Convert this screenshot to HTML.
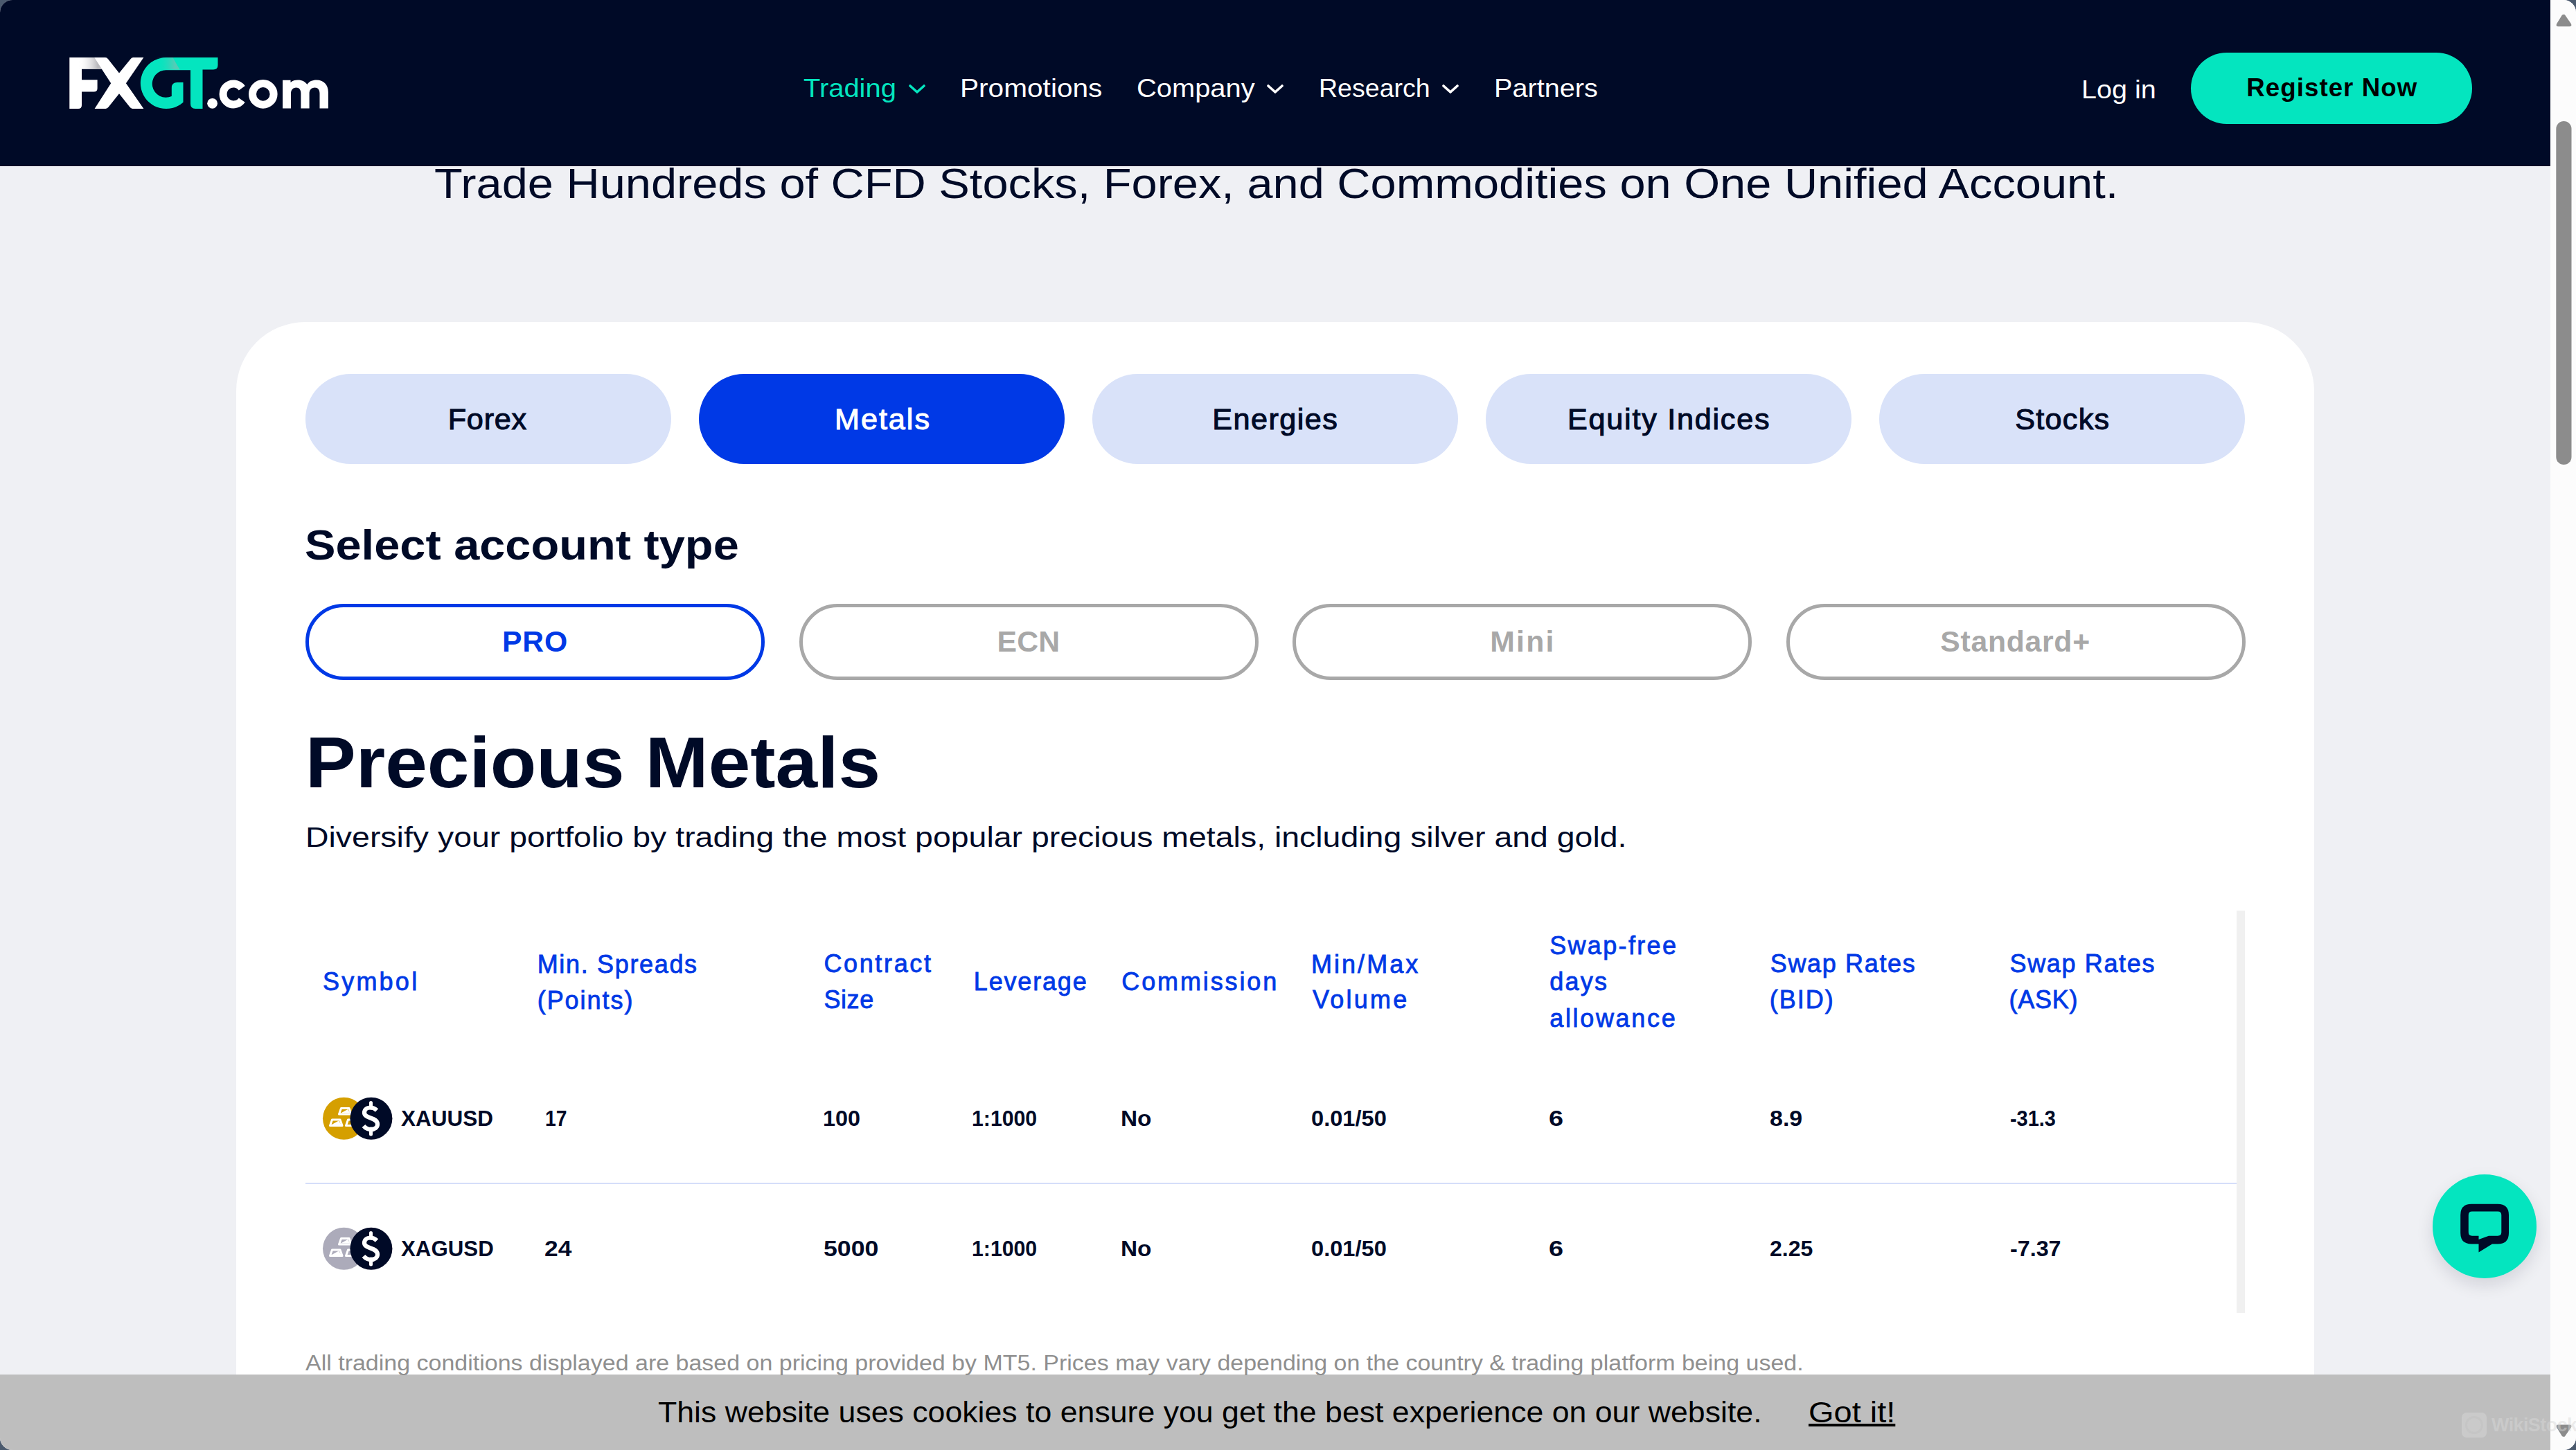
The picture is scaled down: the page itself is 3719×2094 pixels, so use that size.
<!DOCTYPE html>
<html><head><meta charset="utf-8">
<style>
html,body{margin:0;padding:0;width:3719px;height:2094px;overflow:hidden;background:#4b5a6e;}
body{font-family:"Liberation Sans",sans-serif;position:relative;}
.win{position:absolute;left:0;top:0;width:3719px;height:2094px;border-radius:18px;overflow:hidden;background:#eff0f4;}
.t{position:absolute;white-space:nowrap;line-height:1;margin:0;}
.hdr{position:absolute;left:0;top:0;width:3682px;height:240px;background:#000a27;}
.chev{position:absolute;width:24px;height:13px;}
.reg{position:absolute;left:3163px;top:76px;width:406px;height:103px;border-radius:52px;background:#04e5bf;}
.card{position:absolute;left:341px;top:465px;width:3000px;height:1800px;background:#fff;border-radius:100px;}
.tab{position:absolute;top:540px;width:528px;height:130px;border-radius:65px;background:#d9e2f9;}
.tab.on{background:#0039e6;}
.acc{position:absolute;top:872px;width:663px;height:110px;border-radius:55px;border:5px solid #a8a8a8;box-sizing:border-box;}
.acc.on{border-color:#0039e6;}
.scr{position:absolute;left:3682px;top:0;width:37px;height:2094px;background:#fcfcfc;}
.cookie{position:absolute;left:0;top:1985px;width:3682px;height:109px;background:#bebebe;}
.ico{position:absolute;width:61px;height:61px;border-radius:50%;}
</style></head>
<body>
<div class="win">
  <div class="hdr"></div>
  <svg style="position:absolute;left:90px;top:70px" width="400" height="100" viewBox="90 70 400 100">
    <path fill="#fff" d="M100.3,83.1 H136 L146.8,99.8 H118 V115.3 H140.6 V127.4 Q140.6,132.4 135.6,132.4 H118 V151.9 Q118,156.9 113,156.9 H100.3 Z M136,83.1 H152 Q154.5,83.1 156,85.2 L172,105.4 L188.5,85.2 Q190,83.1 192.5,83.1 H207.4 L181.9,120.3 L207.4,156.9 H191.5 Q189,156.9 187.5,154.8 L172,135.2 L156.5,154.8 Q155,156.9 152.5,156.9 H136.6 L160.2,120.3 Z"/>
    <path fill="#04e5bf" d="M264.5,119 V147.7 A37,37 0 1 1 240,83.1 H314.5 V94 Q314.5,100.5 308,100.5 H292.5 V156.9 H282 Q275,156.9 275,150 V101.2 H240 A19.8,19.8 0 1 0 247.8,139 V127 Q247.8,119 255.8,119 Z"/>
    <defs>
      <linearGradient id="gF" gradientUnits="userSpaceOnUse" x1="112" y1="0" x2="141" y2="0"><stop offset="0" stop-color="#fff" stop-opacity="0"/><stop offset="1" stop-color="#b9b9bd" stop-opacity="1"/></linearGradient>
      <linearGradient id="gG" gradientUnits="userSpaceOnUse" x1="226" y1="0" x2="252" y2="0"><stop offset="0" stop-color="#04e5bf" stop-opacity="0"/><stop offset="1" stop-color="#5cc9b5" stop-opacity="0.9"/></linearGradient>
    </defs>
    <path fill="url(#gF)" d="M108,83.1 H136.3 L147,99.8 H108 Z"/>
    <path fill="url(#gG)" d="M226,83.1 H249.5 L259.5,100.5 H226 Z" clip-path="none"/>
    <circle cx="306.6" cy="149.3" r="7.4" fill="#fff"/>
    <path fill="none" stroke="#fff" stroke-width="11" d="M349.3,127.2 A15,15 0 1 0 349.3,144.6"/>
    <circle cx="379.8" cy="135.9" r="15.3" fill="none" stroke="#fff" stroke-width="11"/>
    <path fill="#fff" d="M408.1,156.4 V115.8 H419.5 V119 C422,116.5 426,115.4 430,115.4 C436,115.4 441,118 443.5,122 C446,117.5 451,115.4 457,115.4 C467,115.4 473.9,122 473.9,133 V156.4 H461.5 V135 C461.5,129.5 459,126.5 454.5,126.5 C449.5,126.5 446.6,130 446.6,135 V156.4 H434.4 V135 C434.4,129.5 432,126.5 427.5,126.5 C423,126.5 420,130 420,135 V156.4 Z"/>
  </svg>
  <svg class="chev" style="left:1312px;top:122px" viewBox="0 0 24 13"><path d="M2,2 L12,11 L22,2" fill="none" stroke="#04e5bf" stroke-width="3.6" stroke-linecap="round" stroke-linejoin="round"/></svg>
  <svg class="chev" style="left:1829px;top:122px" viewBox="0 0 24 13"><path d="M2,2 L12,11 L22,2" fill="none" stroke="#fff" stroke-width="3.6" stroke-linecap="round" stroke-linejoin="round"/></svg>
  <svg class="chev" style="left:2082px;top:122px" viewBox="0 0 24 13"><path d="M2,2 L12,11 L22,2" fill="none" stroke="#fff" stroke-width="3.6" stroke-linecap="round" stroke-linejoin="round"/></svg>
  <div class="reg"></div>

  <div class="card"></div>
  <div class="tab" style="left:441px"></div>
  <div class="tab on" style="left:1009px"></div>
  <div class="tab" style="left:1577px"></div>
  <div class="tab" style="left:2145px"></div>
  <div class="tab" style="left:2713px"></div>

  <div class="acc on" style="left:441px"></div>
  <div class="acc" style="left:1154px"></div>
  <div class="acc" style="left:1866px"></div>
  <div class="acc" style="left:2579px"></div>

  <!-- table -->
  <div style="position:absolute;left:441px;top:1708px;width:2788px;height:2px;background:#d5defa"></div>
  <div style="position:absolute;left:3229px;top:1315px;width:12px;height:581px;background:#f0f0f0"></div>
  <svg style="position:absolute;left:460px;top:1579px" width="115" height="75" viewBox="460 1579 115 75">
    <circle cx="496.5" cy="1615.3" r="30.5" fill="#d59f00"/>
    <g fill="none" stroke="#fff" stroke-width="3" stroke-linejoin="round" transform="translate(2,0)">
      <path d="M490.5,1600.5 H502 L505,1609 H487.5 Z"/>
      <path d="M477.5,1617 H489 L492,1625.5 H474.5 Z"/>
      <path d="M500.5,1617 H512 L515,1625.5 H497.5 Z"/>
    </g>
    <path d="M490,1607.5 L500,1602 L503.5,1607.5 Z M477,1624 L487,1618.5 L490.5,1624 Z" fill="#fff" transform="translate(2,0)"/>
    <circle cx="535.9" cy="1615.3" r="30.5" fill="#000a27"/>
    <path d="M544,1603.5 C541,1600.5 538,1599.5 535,1599.5 C529.5,1599.5 526,1602.5 526,1607 C526,1616 545,1613 545,1623.5 C545,1628 541,1631 535.5,1631 C531,1631 527.5,1629 525,1626" fill="none" stroke="#fff" stroke-width="6.2" stroke-linecap="butt"/>
    <path d="M535.5,1592.5 V1600 M535.5,1630 V1638" stroke="#fff" stroke-width="5" stroke-linecap="round"/>
  </svg>
  <svg style="position:absolute;left:460px;top:1767px" width="115" height="75" viewBox="460 1579 115 75">
    <circle cx="496.5" cy="1615.3" r="30.5" fill="#acabba"/>
    <g fill="none" stroke="#fff" stroke-width="3" stroke-linejoin="round" transform="translate(2,0)">
      <path d="M490.5,1600.5 H502 L505,1609 H487.5 Z"/>
      <path d="M477.5,1617 H489 L492,1625.5 H474.5 Z"/>
      <path d="M500.5,1617 H512 L515,1625.5 H497.5 Z"/>
    </g>
    <path d="M490,1607.5 L500,1602 L503.5,1607.5 Z M477,1624 L487,1618.5 L490.5,1624 Z" fill="#fff" transform="translate(2,0)"/>
    <circle cx="535.9" cy="1615.3" r="30.5" fill="#000a27"/>
    <path d="M544,1603.5 C541,1600.5 538,1599.5 535,1599.5 C529.5,1599.5 526,1602.5 526,1607 C526,1616 545,1613 545,1623.5 C545,1628 541,1631 535.5,1631 C531,1631 527.5,1629 525,1626" fill="none" stroke="#fff" stroke-width="6.2" stroke-linecap="butt"/>
    <path d="M535.5,1592.5 V1600 M535.5,1630 V1638" stroke="#fff" stroke-width="5" stroke-linecap="round"/>
  </svg>
  <div class="cookie"></div>
<div class="t" style="left:1159.6px;top:110.4px;font-size:36px;font-weight:normal;transform:scaleX(1.1085);transform-origin:0 0;color:#04e5bf;">Trading</div>
<div class="t" style="left:1386.0px;top:110.4px;font-size:36px;font-weight:normal;transform:scaleX(1.1281);transform-origin:0 0;color:#fff;">Promotions</div>
<div class="t" style="left:1640.8px;top:110.4px;font-size:36px;font-weight:normal;transform:scaleX(1.1072);transform-origin:0 0;color:#fff;">Company</div>
<div class="t" style="left:1903.5px;top:110.4px;font-size:36px;font-weight:normal;transform:scaleX(1.043);transform-origin:0 0;color:#fff;">Research</div>
<div class="t" style="left:2156.6px;top:110.4px;font-size:36px;font-weight:normal;transform:scaleX(1.1015);transform-origin:0 0;color:#fff;">Partners</div>
<div class="t" style="left:3004.6px;top:111.5px;font-size:36px;font-weight:normal;transform:scaleX(1.0978);transform-origin:0 0;color:#fff;">Log in</div>
<div class="t" style="left:3243.3px;top:108.9px;font-size:36.63px;font-weight:bold;letter-spacing:1.073px;color:#000;">Register Now</div>
<div class="t" style="left:626.5px;top:235.1px;font-size:61.05px;font-weight:normal;transform:scaleX(1.0934);transform-origin:0 0;color:#000a27;">Trade Hundreds of CFD Stocks, Forex, and Commodities on One Unified Account.</div>
<div class="t" style="left:646.7px;top:583.8px;font-size:43.2px;font-weight:normal;letter-spacing:0.775px;color:#000a27;-webkit-text-stroke:1.1px currentColor;">Forex</div>
<div class="t" style="left:1205.0px;top:583.8px;font-size:43.2px;font-weight:normal;letter-spacing:1.960px;color:#fff;-webkit-text-stroke:1.1px currentColor;">Metals</div>
<div class="t" style="left:1750.3px;top:583.8px;font-size:43.2px;font-weight:normal;letter-spacing:1.443px;color:#000a27;-webkit-text-stroke:1.1px currentColor;">Energies</div>
<div class="t" style="left:2263.0px;top:583.8px;font-size:43.2px;font-weight:normal;letter-spacing:1.746px;color:#000a27;-webkit-text-stroke:1.1px currentColor;">Equity Indices</div>
<div class="t" style="left:2909.2px;top:583.8px;font-size:43.2px;font-weight:normal;letter-spacing:1.260px;color:#000a27;-webkit-text-stroke:1.1px currentColor;">Stocks</div>
<div class="t" style="left:439.7px;top:756.6px;font-size:61.05px;font-weight:bold;transform:scaleX(1.0931);transform-origin:0 0;color:#000a27;">Select account type</div>
<div class="t" style="left:725.0px;top:905.0px;font-size:42.73px;font-weight:bold;letter-spacing:0.800px;color:#0039e6;">PRO</div>
<div class="t" style="left:1439.4px;top:905.0px;font-size:42.73px;font-weight:bold;letter-spacing:0.250px;color:#a8a8a8;">ECN</div>
<div class="t" style="left:2151.3px;top:905.0px;font-size:42.73px;font-weight:bold;letter-spacing:2.233px;color:#a8a8a8;">Mini</div>
<div class="t" style="left:2801.3px;top:905.0px;font-size:42.73px;font-weight:bold;letter-spacing:0.712px;color:#a8a8a8;">Standard+</div>
<div class="t" style="left:441.3px;top:1049.2px;font-size:104px;font-weight:bold;transform:scaleX(1.0483);transform-origin:0 0;color:#000a27;">Precious Metals</div>
<div class="t" style="left:441.1px;top:1188.1px;font-size:41.5px;font-weight:normal;transform:scaleX(1.119);transform-origin:0 0;color:#000a27;">Diversify your portfolio by trading the most popular precious metals, including silver and gold.</div>
<div class="t" style="left:465.9px;top:1400.3px;font-size:36px;font-weight:normal;letter-spacing:3.240px;color:#0039e6;-webkit-text-stroke:0.8px currentColor;">Symbol</div>
<div class="t" style="left:775.7px;top:1374.7px;font-size:36px;font-weight:normal;letter-spacing:1.664px;color:#0039e6;-webkit-text-stroke:0.8px currentColor;">Min. Spreads</div>
<div class="t" style="left:775.7px;top:1426.5px;font-size:36px;font-weight:normal;letter-spacing:1.957px;color:#0039e6;-webkit-text-stroke:0.8px currentColor;">(Points)</div>
<div class="t" style="left:1189.4px;top:1374.3px;font-size:36px;font-weight:normal;letter-spacing:2.643px;color:#0039e6;-webkit-text-stroke:0.8px currentColor;">Contract</div>
<div class="t" style="left:1189.4px;top:1425.9px;font-size:36px;font-weight:normal;letter-spacing:0.600px;color:#0039e6;-webkit-text-stroke:0.8px currentColor;">Size</div>
<div class="t" style="left:1405.8px;top:1400.4px;font-size:36px;font-weight:normal;letter-spacing:1.829px;color:#0039e6;-webkit-text-stroke:0.8px currentColor;">Leverage</div>
<div class="t" style="left:1619.3px;top:1400.4px;font-size:36px;font-weight:normal;letter-spacing:2.878px;color:#0039e6;-webkit-text-stroke:0.8px currentColor;">Commission</div>
<div class="t" style="left:1893.0px;top:1374.6px;font-size:36px;font-weight:normal;letter-spacing:3.033px;color:#0039e6;-webkit-text-stroke:0.8px currentColor;">Min/Max</div>
<div class="t" style="left:1895.0px;top:1426.3px;font-size:36px;font-weight:normal;letter-spacing:3.260px;color:#0039e6;-webkit-text-stroke:0.8px currentColor;">Volume</div>
<div class="t" style="left:2237.2px;top:1348.3px;font-size:36px;font-weight:normal;letter-spacing:2.338px;color:#0039e6;-webkit-text-stroke:0.8px currentColor;">Swap-free</div>
<div class="t" style="left:2237.2px;top:1399.9px;font-size:36px;font-weight:normal;letter-spacing:2.233px;color:#0039e6;-webkit-text-stroke:0.8px currentColor;">days</div>
<div class="t" style="left:2237.2px;top:1452.9px;font-size:36px;font-weight:normal;letter-spacing:2.675px;color:#0039e6;-webkit-text-stroke:0.8px currentColor;">allowance</div>
<div class="t" style="left:2555.8px;top:1374.0px;font-size:36px;font-weight:normal;letter-spacing:1.644px;color:#0039e6;-webkit-text-stroke:0.8px currentColor;">Swap Rates</div>
<div class="t" style="left:2554.8px;top:1425.7px;font-size:36px;font-weight:normal;letter-spacing:2.000px;color:#0039e6;-webkit-text-stroke:0.8px currentColor;">(BID)</div>
<div class="t" style="left:2901.5px;top:1374.0px;font-size:36px;font-weight:normal;letter-spacing:1.644px;color:#0039e6;-webkit-text-stroke:0.8px currentColor;">Swap Rates</div>
<div class="t" style="left:2900.5px;top:1425.7px;font-size:36px;font-weight:normal;letter-spacing:0.750px;color:#0039e6;-webkit-text-stroke:0.8px currentColor;">(ASK)</div>
<div class="t" style="left:579.0px;top:1600.3px;font-size:30.5px;font-weight:bold;transform:scaleX(1.0328);transform-origin:0 0;color:#000a27;">XAUUSD</div>
<div class="t" style="left:786.6px;top:1600.3px;font-size:30.5px;font-weight:bold;transform:scaleX(0.929);transform-origin:0 0;color:#000a27;">17</div>
<div class="t" style="left:1187.9px;top:1600.3px;font-size:30.5px;font-weight:bold;transform:scaleX(1.0625);transform-origin:0 0;color:#000a27;">100</div>
<div class="t" style="left:1403.3px;top:1600.3px;font-size:30.5px;font-weight:bold;transform:scaleX(0.9913);transform-origin:0 0;color:#000a27;">1:1000</div>
<div class="t" style="left:1618.4px;top:1600.3px;font-size:30.5px;font-weight:bold;transform:scaleX(1.0947);transform-origin:0 0;color:#000a27;">No</div>
<div class="t" style="left:1892.8px;top:1600.3px;font-size:30.5px;font-weight:bold;transform:scaleX(1.07);transform-origin:0 0;color:#000a27;">0.01/50</div>
<div class="t" style="left:2236.2px;top:1600.3px;font-size:30.5px;font-weight:bold;transform:scaleX(1.24);transform-origin:0 0;color:#000a27;">6</div>
<div class="t" style="left:2554.9px;top:1600.3px;font-size:30.5px;font-weight:bold;transform:scaleX(1.1146);transform-origin:0 0;color:#000a27;">8.9</div>
<div class="t" style="left:2901.7px;top:1600.3px;font-size:30.5px;font-weight:bold;transform:scaleX(0.9471);transform-origin:0 0;color:#000a27;">-31.3</div>
<div class="t" style="left:579.0px;top:1787.9px;font-size:30.5px;font-weight:bold;transform:scaleX(1.0248);transform-origin:0 0;color:#000a27;">XAGUSD</div>
<div class="t" style="left:786.2px;top:1788.1px;font-size:30.5px;font-weight:bold;transform:scaleX(1.1606);transform-origin:0 0;color:#000a27;">24</div>
<div class="t" style="left:1188.8px;top:1788.1px;font-size:30.5px;font-weight:bold;transform:scaleX(1.1712);transform-origin:0 0;color:#000a27;">5000</div>
<div class="t" style="left:1403.3px;top:1788.1px;font-size:30.5px;font-weight:bold;transform:scaleX(0.9913);transform-origin:0 0;color:#000a27;">1:1000</div>
<div class="t" style="left:1618.4px;top:1788.1px;font-size:30.5px;font-weight:bold;transform:scaleX(1.0947);transform-origin:0 0;color:#000a27;">No</div>
<div class="t" style="left:1892.8px;top:1788.1px;font-size:30.5px;font-weight:bold;transform:scaleX(1.07);transform-origin:0 0;color:#000a27;">0.01/50</div>
<div class="t" style="left:2236.2px;top:1788.1px;font-size:30.5px;font-weight:bold;transform:scaleX(1.24);transform-origin:0 0;color:#000a27;">6</div>
<div class="t" style="left:2554.9px;top:1788.1px;font-size:30.5px;font-weight:bold;transform:scaleX(1.0517);transform-origin:0 0;color:#000a27;">2.25</div>
<div class="t" style="left:2901.5px;top:1788.1px;font-size:30.5px;font-weight:bold;transform:scaleX(1.0582);transform-origin:0 0;color:#000a27;">-7.37</div>
<div class="t" style="left:441.4px;top:1953.2px;font-size:31px;font-weight:normal;transform:scaleX(1.0961);transform-origin:0 0;color:#8f8f8f;">All trading conditions displayed are based on pricing provided by MT5. Prices may vary depending on the country &amp; trading platform being used.</div>
<div class="t" style="left:949.5px;top:2019.4px;font-size:42.1px;font-weight:normal;transform:scaleX(1.0608);transform-origin:0 0;color:#000;">This website uses cookies to ensure you get the best experience on our website.</div>
<div class="t" style="left:2611.3px;top:2019.2px;font-size:42.1px;font-weight:normal;transform:scaleX(1.1159);transform-origin:0 0;color:#000;text-decoration:underline;text-decoration-thickness:4px;text-underline-offset:2px;">Got it!</div>
  <div style="position:absolute;left:3512px;top:1696px;width:150px;height:150px;border-radius:50%;background:#04e5bf;box-shadow:0 10px 24px rgba(0,10,39,0.12)"></div>
  <svg style="position:absolute;left:3545px;top:1730px" width="85" height="85" viewBox="3545 1730 85 85">
    <path fill="#000a27" fill-rule="evenodd" d="M3568,1738.8 H3606 Q3622,1738.8 3622,1754.8 V1780.4 Q3622,1796.4 3606,1796.4 H3598 L3578.5,1808.6 V1796.4 H3568 Q3552.2,1796.4 3552.2,1780.4 V1754.8 Q3552.2,1738.8 3568,1738.8 Z M3569,1749.5 Q3563.8,1749.5 3563.8,1754.7 V1779.5 Q3563.8,1784.7 3569,1784.7 H3578.5 V1790 L3593,1784.7 H3606 Q3611.3,1784.7 3611.3,1779.5 V1754.7 Q3611.3,1749.5 3606,1749.5 Z"/>
  </svg>
  <div class="scr"></div>
  <svg style="position:absolute;left:3682px;top:0" width="37" height="2094" viewBox="0 0 37 2094">
    <path d="M19,21 Q20,20.5 21,21.5 L30,34.5 Q31.5,38.3 27.5,38.3 H11.5 Q7.5,38.3 9,34.5 L17,21.5 Z" fill="#8c8c8c"/>
    <rect x="8.3" y="175" width="22.2" height="496" rx="11.1" fill="#8c8c8c"/>
    <path d="M19,2074.8 Q20,2075.3 21,2074.3 L30,2061.3 Q31.5,2057.5 27.5,2057.5 H11.5 Q7.5,2057.5 9,2061.3 L17,2074.3 Z" fill="#8c8c8c"/>
  </svg>
  <div style="position:absolute;left:3554px;top:2040px;width:36px;height:36px;border-radius:7px;background:rgba(216,216,216,0.47)"></div>
  <div style="position:absolute;left:3559px;top:2045px;width:26px;height:26px;border-radius:50%;border:3px solid rgba(190,190,190,0.35);box-sizing:border-box"></div>
  <div class="t" style="left:3597px;top:2045px;font-size:27px;font-weight:bold;color:rgba(216,216,216,0.47);letter-spacing:-0.6px">WikiStock</div>
</div>
</body></html>
